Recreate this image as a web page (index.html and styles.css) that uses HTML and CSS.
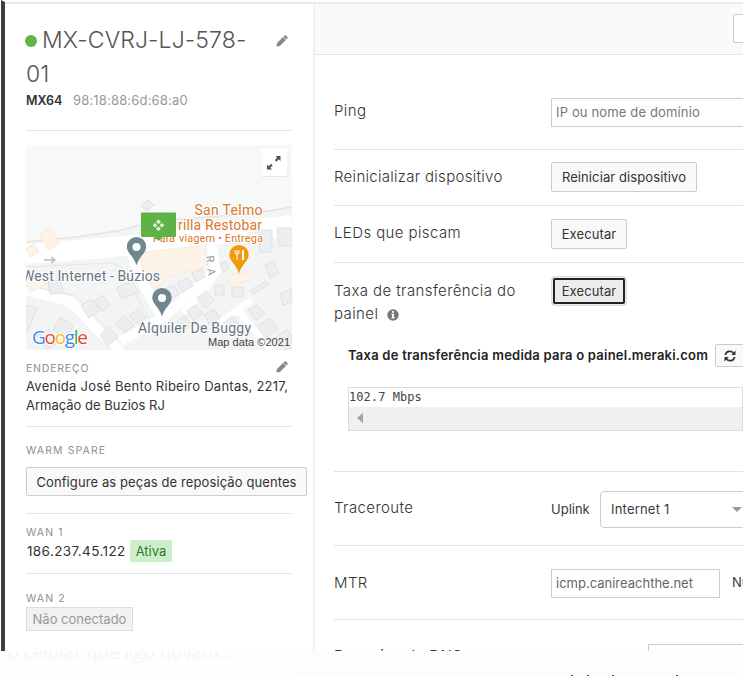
FILE: index.html
```html
<!DOCTYPE html>
<html lang="pt-BR">
<head>
<meta charset="utf-8">
<title>MX-CVRJ-LJ-578-01</title>
<link rel="stylesheet" href="styles.css">
</head>
<body>
<svg class="defs" width="0" height="0" aria-hidden="true">
  <symbol id="pencil" viewBox="0 0 12 12"><path d="M1 8.100 7 2.100l2.900 2.900L3.900 11 .4 11.600zM7.400 1.700l1.100-1.100q.7-.6 1.400 0l1.500 1.500q.6.7 0 1.400l-1.100 1.100z"/></symbol>
  <symbol id="pin" viewBox="0 0 20 29"><path d="M10 0a9.700 9.700 0 0 1 9.700 9.700c0 6-7 9.500-9.700 18.800C7.300 19.200.3 15.700.3 9.700A9.700 9.700 0 0 1 10 0z"/></symbol>
</svg>
<div class="window">
  <aside class="sidebar">
    <section class="identity">
      <h1><span class="dot"></span>MX-CVRJ-LJ-578-<br>01</h1>
      <svg class="edit"><use href="#pencil"/></svg>
      <p class="model"><b>MX64</b><span>98:18:88:6d:68:a0</span></p>
    </section>
    <section class="place">
      <svg class="map" viewBox="0 0 266 205">
        <rect width="266" height="205" fill="#f7f9f9"/>
        <path d="M0 97 50 92 92 86 133 75 160 74 230 68 266 62V205H0z" fill="#f3f5f5"/>
        <path d="M0 97 50 92 92 86 133 75 160 74 230 68 266 62" fill="none" stroke="#e1e5e8" stroke-width="1.500"/>
        <g fill="none" stroke="#fff" stroke-width="10">
          <path d="M0 109 100 101 185 90 266 80" stroke-width="20"/>
          <path d="M0 145 45 157 80 193 96 205"/>
          <path d="M105 108 118 140 136 173M185 96 190 126 136 173 86 201"/>
          <path d="M192 125 178 145 157 168M190 180 212 165 245 205M212 165 225 155" stroke-width="7"/>
        </g>
        <path d="M0 122 86 118 95 122 110 150 126 180M0 140 50 151 84 187 98 202" fill="none" stroke="#e4e7e9"/>
        <g fill="#fdf3e6" stroke="#faebd7">
          <path d="m14 89 10-6 10 15-12 7zM0 103l8-4 5 8-9 5zM0 137l20-6v8l-16 8zM112 108l68-8-2 23-34 8-15 13-10-12z"/>
          <path d="m222 88 10-1 1 12-10 1zM203 131l20-5 2 9-22 6z"/>
        </g>
        <g fill="#eceef0" stroke="#dfe2e5">
          <path d="m115 61 7-6 6 5-7 6zM22 137l12-2 3 13-13 1zM0 160l11 3-9 23-2 1zM55 161l10-7 9 11-11 8zM68 156l8-6 8 10-8 6zM90 143l16-7 7 11-17 7zM90 178l9-7 9 10-9 7zM103 170l10-6 7 9-9 6zM74 190l9-8 9 10-10 9z"/>
          <path d="m138 144 10-4 5 9-9 5zM151 138l11-5 5 8-11 6zM166 128l9-4 4 8-9 5zM189 140h9v10h-9zM206 142h11v10h-11zM171 153l9-7 8 9-9 8zM161 166l8-6 8 9-9 7zM151 176l8-5 6 9-9 6zM178 170l10-6 6 9-10 7zM194 119l6-3 3 7-6 4zM233 85h13v22h-12zM251 83h15v18h-13z"/>
          <path d="m225 145 15-9 2 4-15 9zM239 120l9-4 5 12-9 5zM254 149l11-5 1 13-9 3zM222 165l9-5 8 9-9 6zM231 181l13-8 8 11-13 9zM250 192l11-8 5 7v12l-7 2zM10 190l13-6 9 13-11 8zM34 172l13 9-7 12-13-8zM197 178l10-7 9 12-9 7z"/>
        </g>
        <path d="M18 115h11m-4-3 4 3-4 3" fill="none" stroke="#b8bdc1" stroke-width="1.500"/>
        <g fill="#71878f"><use href="#pin" x="100.500" y="92" width="20" height="29"/><use href="#pin" x="126" y="143" width="20" height="29"/></g>
        <g fill="#fff"><circle cx="110.500" cy="102" r="4"/><circle cx="136" cy="153" r="4"/></g>
        <use href="#pin" x="203" y="100" width="20" height="29" fill="#f39a0b"/>
        <g stroke="#fff" fill="none"><path d="M209 105v3q2 3 4 0v-3m-2 0v10"/><path d="M217 105v10" stroke-width="2"/></g>
        <g class="poi">
          <text x="168.500" y="70" textLength="68">San Telmo</text>
          <text x="152" y="84.500" textLength="84">rilla Restobar</text>
          <text class="sm" x="127" y="96.500" textLength="22">Para</text>
          <text class="sm" x="153" y="96.500" textLength="84">viagem • Entrega</text>
        </g>
        <g class="place-name">
          <text x="-4" y="136" textLength="138">West Internet - Búzios</text>
          <text x="112" y="187.500" textLength="113">Alquiler De Buggy</text>
          <text class="street" transform="translate(180 111) rotate(84)" textLength="20">R. A</text>
        </g>
        <path d="M116 67.500h33q1 0 1 1v22.500q0 1-1 1h-12.500l-4 4-4-4H116q-1 0-1-1V68.500q0-1 1-1z" fill="#5fb246"/>
        <g fill="none" stroke="#fff" stroke-width="1.100"><path d="m132.500 75.300 1.500 1.500-1.500 1.500-1.500-1.500zM132.500 82.300l1.500 1.500-1.500 1.500-1.500-1.500zM129 78.800l1.500 1.500-1.500 1.500-1.500-1.500zM136 78.800l1.500 1.500-1.500 1.500-1.500-1.500z"/></g>
        <rect x="235.500" y="5" width="27" height="27" rx="2" fill="#e4e6e6"/>
        <rect x="235.500" y="4" width="26" height="27" rx="2" fill="#fff"/>
        <path d="M249.500 11h5v5l-1.700-1.700-2.400 2.400-1.600-1.600 2.400-2.400zM241 19.500v5h5l-1.700-1.700 2.400-2.400-1.600-1.600-2.400 2.400z" fill="#555"/>
        <text class="google" x="6" y="198.500" textLength="56"><tspan fill="#4285f4">G</tspan><tspan fill="#ea4335">o</tspan><tspan fill="#fbbc05">o</tspan><tspan fill="#4285f4">g</tspan><tspan fill="#34a853">l</tspan><tspan fill="#ea4335">e</tspan></text>
        <text class="credit" x="182" y="201" textLength="82">Map data ©2021</text>
      </svg>
      <h2>ENDEREÇO</h2>
      <svg class="edit"><use href="#pencil"/></svg>
      <p class="address"><span>Avenida José Bento Ribeiro Dantas, 2217,</span><br>Armação de Buzios RJ</p>
    </section>
    <section class="spare">
      <h2>WARM SPARE</h2>
      <button class="wide">Configure as peças de reposição quentes</button>
    </section>
    <section class="wan1">
      <h2>WAN 1</h2>
      <p><span class="ip">186.237.45.122</span><span class="active">Ativa</span></p>
    </section>
    <section class="wan2">
      <h2>WAN 2</h2>
      <span class="offline">Não conectado</span>
    </section>
  </aside>
  <main>
    <header><button class="cut"></button></header>
    <div class="rows">
      <div class="row ping"><label>Ping</label><div class="field placeholder">IP ou nome de domínio</div></div>
      <div class="row reboot"><label>Reinicializar dispositivo</label><button class="restart">Reiniciar dispositivo</button></div>
      <div class="row leds"><label>LEDs que piscam</label><button class="run">Executar</button></div>
      <div class="row rate">
        <div class="top"><label>Taxa de transferência do<br>painel <svg class="info" viewBox="0 0 12 12"><circle cx="6" cy="6" r="5.700" fill="#777"/><path d="M5 2h2v1.700H5zM4.500 4.800H7v3.600h.8v1.100H4.300V8.400H5V5.900h-.5z" fill="#fff"/></svg></label><button class="run focused">Executar</button></div>
        <div class="result"><strong>Taxa de transferência medida para o painel.meraki.com</strong><button class="refresh"><svg viewBox="0 0 12 12" fill="none" stroke="#333" stroke-width="1.700"><path d="M1.300 5A4.700 4.700 0 0 1 9.500 3M10.700 7A4.700 4.700 0 0 1 2.500 9"/><path d="M11.500.6v4.300H7.200zM.5 11.400V7.100h4.300z" fill="#333" stroke="none"/></svg></button></div>
        <div class="output"><pre>102.7 Mbps</pre><div class="scroll"><i></i></div></div>
      </div>
      <div class="row trace"><label>Traceroute</label><span class="uplink">Uplink</span><div class="select"><span>Internet 1</span><i></i></div></div>
      <div class="row mtr"><label>MTR</label><div class="field host">icmp.canireachthe.net</div><span class="number">Número</span></div>
      <div class="row dns"><label>Pesquisa de DNS</label><div class="field"></div></div>
    </div>
  </main>
</div>
<footer><span class="ghost">o celular que ligo novam...</span><span class="warm"></span><div class="ticks"><i></i><i></i><i></i><i></i></div></footer>
</body>
</html>
```
FILE: styles.css
```css
* { box-sizing: border-box; }
body { margin: 0; width: 743px; height: 676px; overflow: hidden; background: #fff; color: #3a3a3a; font: 13px/19px Inter, "Liberation Sans", sans-serif; }
h1, h2, p, pre { margin: 0; }
.defs { position: absolute; }
.window { display: flex; height: 651px; overflow: hidden; margin-left: 1px; border-left: 4px solid #3b3f42; border-top: 2px solid #fff; }
.sidebar { flex: none; width: 308px; padding-left: 21px; border-top: 2px solid #e9e9e9; }
.sidebar section { position: relative; width: 266px; border-bottom: 1px solid #e4e4e4; }
.sidebar .identity { height: 127px; padding-top: 20px; }
h1 { font-size: 23px; line-height: 33.500px; font-weight: 300; letter-spacing: .1px; color: #555; white-space: nowrap; }
.dot { display: inline-block; width: 12px; height: 12px; border-radius: 50%; background: #62b445; margin: 0 5px 0 -1px; vertical-align: 1px; }
.edit { position: absolute; width: 12px; height: 12px; fill: #888; right: 4px; top: 31px; }
.model { line-height: 18px; color: #999; white-space: nowrap; letter-spacing: .17px; }
.model b { display: inline-block; width: 47px; font-size: 12.500px; font-weight: 600; letter-spacing: 0; color: #333; }
.sidebar .place { height: 296px; padding-top: 14px; }
.map { display: block; width: 266px; height: 205px; overflow: hidden; }
.place .edit { top: 230px; }
h2 { font-size: 10.500px; line-height: 14px; font-weight: 400; letter-spacing: 1.100px; color: #909090; white-space: nowrap; }
.place h2 { margin-top: 12px; letter-spacing: .8px; }
.address { margin-top: 1px; color: #333; white-space: nowrap; }
.address span { letter-spacing: .25px; }
.spare { height: 87px; padding-top: 17px; }
.spare h2 { margin-bottom: 9px; }
button { display: block; flex: none; font: 13px/18px Inter, sans-serif; letter-spacing: .1px; color: #333; background: #f9f9f9; border: 1px solid #ccc; border-radius: 2px; padding: 0; white-space: nowrap; }
.wide { width: 281px; height: 29px; }
.wan1 { height: 60px; padding-top: 12px; }
.wan1 p { display: flex; line-height: 22px; color: #333; }
.ip { width: 104px; padding-left: 1px; font-size: 13.500px; letter-spacing: .38px; }
.active { width: 42px; text-align: center; background: #cdeecb; color: #2f7a26; border-radius: 2px; }
.sidebar .wan2 { border: 0; padding-top: 18px; }
.offline { display: block; width: 107px; height: 24px; margin-top: 1px; line-height: 22px; text-align: center; color: #999; background: #f2f2f2; border: 1px solid #ddd; }
.poi { font: 14px Roboto, sans-serif; fill: #d9782d; stroke: #fff; stroke-width: 2px; paint-order: stroke; }
.poi .sm { font-size: 11px; }
.place-name { font: 14px Roboto, sans-serif; fill: #65757f; stroke: #fff; stroke-width: 2px; paint-order: stroke; }
.place-name .street { font-size: 11px; fill: #929a9f; }
.google { font: 500 19px "Open Sans", sans-serif; stroke: #fff; stroke-width: 2px; paint-order: stroke; }
.credit { font: 11px "Liberation Sans", sans-serif; fill: #444; }
main { flex: 1; min-width: 0; border-left: 2px solid #f0f0f0; border-top: 2px solid #e9e9e9; }
header { height: 51px; padding: 10px 0 0 418px; background: #fafafa; border-bottom: 1px solid #e6e6e6; }
.cut { width: 40px; height: 29px; background: #fff; }
.rows { padding-left: 19px; }
.row { display: flex; border-bottom: 1px solid #e4e4e4; }
label { flex: none; width: 217px; font-size: 15px; line-height: 23px; font-weight: 300; letter-spacing: .4px; color: #333; white-space: nowrap; }
.field { flex: none; width: 200px; height: 29px; padding-left: 4px; line-height: 27px; border: 1px solid #ccc; color: #666; white-space: nowrap; }
.placeholder { letter-spacing: .15px; color: #777; }
.ping { height: 95px; padding-top: 43px; }
.ping label { padding-top: 1px; }
.reboot { height: 56px; padding-top: 12px; }
.reboot label { padding-top: 3px; letter-spacing: .29px; }
.leds label { padding-top: 3px; }
.restart { width: 146px; height: 30px; }
.leds { height: 57px; padding-top: 13px; }
.leds label { padding-top: 2px; }
.run { width: 76px; height: 30px; }
.rate { display: block; height: 209px; padding-top: 13px; }
.top { display: flex; }
.top label { padding-top: 3px; }
.info { width: 12px; height: 12px; margin-left: 4px; vertical-align: -2px; }
.focused { background: #ececec; box-shadow: inset 0 0 0 1px #ececec, inset 0 0 0 3px #222; border-color: #ddd; border-radius: 4px; }
.result { display: flex; align-items: center; margin: 19px 0 0 14px; height: 23px; color: #222; }
.result strong { flex: none; width: 367px; font-weight: 600; letter-spacing: .23px; white-space: nowrap; }
.refresh { width: 29px; height: 23px; padding-left: 8px; }
.refresh svg { display: block; width: 12px; height: 12px; }
.output { margin: 20px 0 0 14px; height: 44px; border: 1px solid #ddd; }
pre { height: 19px; padding-left: 0; font: 12px/19px "DejaVu Sans Mono", monospace; color: #444; letter-spacing: .06px; }
.scroll { height: 23px; background: #f0f0f0; padding: 6px 0 0 8px; }
.scroll i { display: block; width: 0; border: 5px solid transparent; border-right: 6px solid #a3a3a3; border-left: 0; }
.trace { height: 74px; padding-top: 19px; align-items: flex-start; }
.trace label { padding-top: 5px; }
.uplink { flex: none; width: 49px; padding-top: 9px; }
.select { display: flex; flex: none; width: 160px; height: 37px; padding-left: 10px; border: 1px solid #ccc; border-radius: 4px; line-height: 35px; letter-spacing: .2px; }
.select span { flex: none; width: 121px; }
.select i { width: 0; height: 0; margin-top: 15px; border: 5px solid transparent; border-top-color: #999; border-bottom: 0; }
.mtr { height: 74px; padding-top: 23px; }
.mtr label { padding-top: 2px; }
.host { width: 169px; }
.number { margin-left: 12px; padding-top: 4px; white-space: nowrap; }
.dns { border: 0; padding-top: 24px; }
.dns label { width: 314px; padding-top: 0; font-weight: 400; }
footer { position: relative; height: 25px; overflow: hidden; background: #fefefe; }
.ghost { position: absolute; left: 8px; top: -11px; font: 18.500px/24px "Open Sans", sans-serif; color: #f5f5f5; white-space: nowrap; }
.warm { position: absolute; left: 290px; width: 453px; top: 0; height: 25px; background: #fdfdfb; }
.ticks { position: absolute; left: 571px; top: 24px; display: flex; gap: 14px; }
.ticks i { width: 2px; height: 1px; background: #555; }
.ticks i:nth-child(3) { margin-left: 9px; }
.ticks i:nth-child(4) { margin-left: 48px; }
```
